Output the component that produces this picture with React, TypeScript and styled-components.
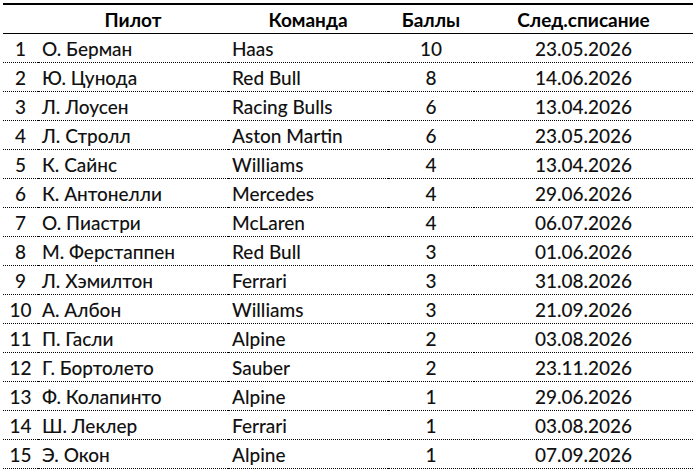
import styled, { createGlobalStyle } from "styled-components";

const GlobalStyle = createGlobalStyle`
  html, body {
    margin: 0;
    padding: 0;
    background: #ffffff;
  }
  body {
    font-family: Lato, "Liberation Sans", sans-serif;
    color: #000000;
  }
`;

const Page = styled('div')`
  padding: 3px 0 0 3px;
`;

const Table = styled('table')`
  border-collapse: separate;
  border-spacing: 0;
  table-layout: fixed;
  width: 690px;
  font-size: 19px;
`;

const HeadCell = styled('th')`
  height: 28px;
  box-sizing: content-box;
  font-weight: 700;
  text-align: center;
  padding: 0;
  white-space: nowrap;
  border-top: 2px solid #000000;
  border-bottom: 1px solid #000000;
`;

const Cell = styled('td')<{ $align?: "left" | "center" }>`
  height: 28px;
  box-sizing: content-box;
  padding: 0 0 0 ${(p) => (p.$align === "left" ? "4px" : "0")};
  text-align: ${(p) => p.$align ?? "center"};
  white-space: nowrap;
  vertical-align: middle;
  border-bottom: 1px dotted #000000;
  color: #111;
  font-weight: 500;
`;

const columns = [35, 190, 160, 86, 219];

const rows: [string, string, number, string][] = [
  ["О. Берман", "Haas", 10, "23.05.2026"],
  ["Ю. Цунода", "Red Bull", 8, "14.06.2026"],
  ["Л. Лоусен", "Racing Bulls", 6, "13.04.2026"],
  ["Л. Стролл", "Aston Martin", 6, "23.05.2026"],
  ["К. Сайнс", "Williams", 4, "13.04.2026"],
  ["К. Антонелли", "Mercedes", 4, "29.06.2026"],
  ["О. Пиастри", "McLaren", 4, "06.07.2026"],
  ["М. Ферстаппен", "Red Bull", 3, "01.06.2026"],
  ["Л. Хэмилтон", "Ferrari", 3, "31.08.2026"],
  ["А. Албон", "Williams", 3, "21.09.2026"],
  ["П. Гасли", "Alpine", 2, "03.08.2026"],
  ["Г. Бортолето", "Sauber", 2, "23.11.2026"],
  ["Ф. Колапинто", "Alpine", 1, "29.06.2026"],
  ["Ш. Леклер", "Ferrari", 1, "03.08.2026"],
  ["Э. Окон", "Alpine", 1, "07.09.2026"],
];

export default function App() {
  return (
    <Page>
      <GlobalStyle />
      <Table>
        <colgroup>
          {columns.map((w, i) => (
            <col key={i} style={{ width: w }} />
          ))}
        </colgroup>
        <thead>
          <tr>
            <HeadCell />
            <HeadCell>Пилот</HeadCell>
            <HeadCell>Команда</HeadCell>
            <HeadCell>Баллы</HeadCell>
            <HeadCell>След.списание</HeadCell>
          </tr>
        </thead>
        <tbody>
          {rows.map(([pilot, team, points, date], i) => (
            <tr key={i}>
              <Cell>{i + 1}</Cell>
              <Cell $align="left">{pilot}</Cell>
              <Cell $align="left">{team}</Cell>
              <Cell>{points}</Cell>
              <Cell>{date}</Cell>
            </tr>
          ))}
        </tbody>
      </Table>
    </Page>
  );
}
